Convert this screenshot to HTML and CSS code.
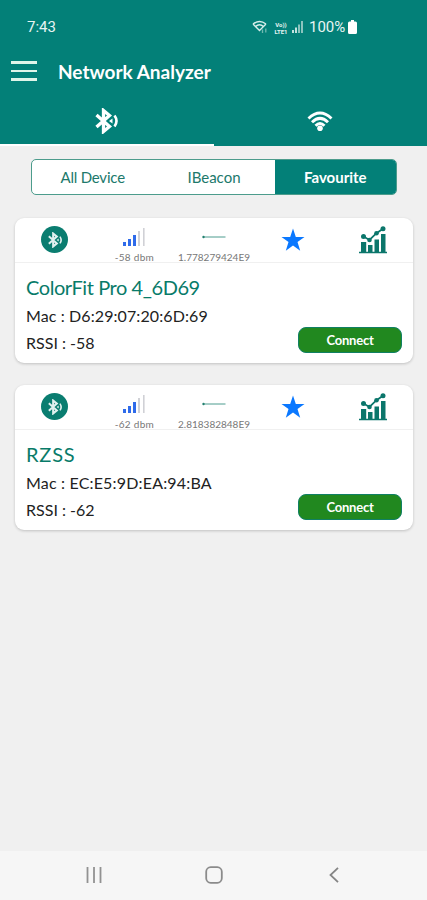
FILE: index.html
```html
<!DOCTYPE html>
<html lang="en">
<head>
    <meta charset="UTF-8">
    <meta name="viewport" content="width=device-width, initial-scale=1.0">
    <title>Network Analyzer</title>
    <link rel="stylesheet" href="styles.css">
</head>
<body>
    <!-- Shared icons -->
    <svg class="defs" width="0" height="0">
        <symbol id="bluetooth" viewBox="0 0 24 26">
            <path d="M2 7 L15 18.5 L9 23.5 V2.500 L15 7.5 L2 19" fill="none" stroke="currentColor" stroke-width="3.300"/>
            <path d="M14.5 13 L18 10.5 V15.5 Z" fill="currentColor"/>
            <path d="M20 7.5 Q24 13 20 18.5" fill="none" stroke="currentColor" stroke-width="2.600"/>
        </symbol>
        <symbol id="wifi" viewBox="0 0 26 20">
            <path d="M1.5 7.5 Q13 -3.5 24.5 7.5 M5 11.3 Q13 3.5 21 11.3 M8.5 14.7 Q13 10.3 17.5 14.7" fill="none" stroke="currentColor" stroke-width="2.900"/>
            <circle cx="13" cy="17.2" r="2.8" fill="currentColor"/>
        </symbol>
        <symbol id="signal" viewBox="0 0 22 20">
            <path d="M0 15h3v4H0zM5 12h3v7H5zM10 8h3v11h-3z" fill="#2f6bea"/>
            <path d="M15 4h2v15h-2zM20 1h1.6v18H20z" fill="#d0d1d6"/>
        </symbol>
        <symbol id="distance" viewBox="0 0 24 4">
            <path d="M1 2h22.5" stroke="#4d9c8f"/>
            <circle cx="1.5" cy="2" r="1.2" fill="#23806f"/>
        </symbol>
        <symbol id="star" viewBox="0 0 24 24">
            <path d="M12 .5l2.8 8.4h8.7l-7 5.2 2.7 8.6-7.2-5.3-7.2 5.3 2.7-8.6-7-5.2h8.7z" fill="#0a78ff"/>
        </symbol>
        <symbol id="chart" viewBox="0 0 28 28">
            <path d="M2 16h5.2v10H2zM9 19h4.5v7H9zM15.500 13.500h4.500v12.500h-4.500zM22 8h4.500v18h-4.500zM0 25.800h28v1.500H0z" fill="#0b766b"/>
            <path d="M4.500 10.500l6 3.500 7-6.800 6.500-4.400" fill="none" stroke="#0b766b" stroke-width="1.800"/>
            <g fill="#0b766b">
                <circle cx="4.500" cy="10.500" r="2.500"/>
                <circle cx="10.500" cy="14" r="2.300"/>
                <circle cx="17.500" cy="7.200" r="2.300"/>
                <circle cx="24" cy="2.800" r="2.500"/>
            </g>
        </symbol>
    </svg>

    <header class="header">
        <div class="status-bar">
            <span class="time">7:43</span>
            <svg class="status-wifi" width="16" height="14" viewBox="0 0 16 14">
                <path d="M1 4Q7.500-1 14 4M3.500 6.500Q7.500 3 11.500 6.500M1 4l6.500 6.500L14 4" fill="none" stroke="#d8eeeb" stroke-width="1.400"/>
                <path d="M10.500 9.500v3.500M13.800 8.500v4" stroke="#72b9b1" stroke-width="1.300"/>
            </svg>
            <span class="volte"><span>Vo))</span><span>LTE1</span></span>
            <svg class="status-signal" width="11" height="12" viewBox="0 0 11 12">
                <path d="M0 9h2v3H0zM3 6.500h2V12H3z" fill="#c3e2df"/>
                <path d="M6 3.500h2V12H6zM9 0h2v12H9z" fill="#8bc4be"/>
            </svg>
            <span class="percent">100%</span>
            <svg class="battery" width="9" height="14" viewBox="0 0 9 14">
                <path d="M3 0h3v1.500h1.500Q9 1.500 9 3v9.500Q9 14 7.500 14h-6Q0 14 0 12.500V3Q0 1.500 1.500 1.500H3z" fill="#fff"/>
            </svg>
        </div>
        <div class="app-bar">
            <div class="menu"><span></span><span></span><span></span></div>
            <h1>Network Analyzer</h1>
        </div>
        <nav class="tabs">
            <div class="tab active"><svg width="25" height="26"><use href="#bluetooth"/></svg></div>
            <div class="tab"><svg width="26" height="20"><use href="#wifi"/></svg></div>
        </nav>
    </header>

    <main>
        <div class="filter">
            <span class="all">All Device</span>
            <span class="ibeacon">IBeacon</span>
            <span class="selected">Favourite</span>
        </div>

        <section class="card">
            <div class="card-head">
                <div class="badge"><svg width="16" height="16"><use href="#bluetooth"/></svg></div>
                <div class="stat"><svg width="22" height="20"><use href="#signal"/></svg><span class="dbm">-58 dbm</span></div>
                <div class="stat"><svg width="24" height="20"><use href="#distance"/></svg><span class="dist">1.778279424E9</span></div>
                <div class="icon"><svg width="24" height="24"><use href="#star"/></svg></div>
                <div class="icon"><svg width="28" height="28"><use href="#chart"/></svg></div>
            </div>
            <div class="card-body">
                <h2 class="name-long">ColorFit Pro 4_6D69</h2>
                <p class="mac">Mac : D6:29:07:20:6D:69</p>
                <p>RSSI : -58</p>
                <button>Connect</button>
            </div>
        </section>

        <section class="card">
            <div class="card-head">
                <div class="badge"><svg width="16" height="16"><use href="#bluetooth"/></svg></div>
                <div class="stat"><svg width="22" height="20"><use href="#signal"/></svg><span class="dbm">-62 dbm</span></div>
                <div class="stat"><svg width="24" height="20"><use href="#distance"/></svg><span class="dist">2.818382848E9</span></div>
                <div class="icon"><svg width="24" height="24"><use href="#star"/></svg></div>
                <div class="icon"><svg width="28" height="28"><use href="#chart"/></svg></div>
            </div>
            <div class="card-body">
                <h2 class="name-short">RZSS</h2>
                <p class="mac mac-wide">Mac : EC:E5:9D:EA:94:BA</p>
                <p>RSSI : -62</p>
                <button>Connect</button>
            </div>
        </section>
    </main>

    <footer class="nav-bar">
        <svg width="16" height="16" viewBox="0 0 16 16"><path d="M1.500 0v16M8 0v16M14.500 0v16" stroke="#929292" stroke-width="1.800"/></svg>
        <svg width="18" height="18" viewBox="0 0 18 18"><rect x="1.200" y="1.200" width="15.600" height="15.600" rx="4.500" fill="none" stroke="#8b8b8b" stroke-width="1.800"/></svg>
        <svg width="10" height="16" viewBox="0 0 10 16"><path d="M9 .8L1.500 8 9 15.200" fill="none" stroke="#858585" stroke-width="1.800"/></svg>
    </footer>
</body>
</html>
```

FILE: styles.css
```css
* {
    box-sizing: border-box;
}

body {
    display: flex;
    flex-direction: column;
    height: 900px;
    margin: 0;
    overflow: hidden;
    background-color: #f0f0f0;
    color: #222;
    font-family: Lato, sans-serif;
}

h1, h2, p {
    margin: 0;
    font-weight: normal;
    white-space: nowrap;
}

svg {
    display: block;
    flex: none;
}

.defs {
    position: absolute;
}

/* Header */
.header {
    height: 146px;
    background-color: #038078;
    color: #fff;
    flex: none;
}

.status-bar {
    display: flex;
    align-items: center;
    height: 54px;
    padding-left: 27px;
    font-family: Roboto, sans-serif;
    font-size: 15px;
    color: #e8f5f3;
}

.time {
    width: 225px;
}

.volte {
    display: flex;
    flex-direction: column;
    width: 16px;
    margin: 2px 3px 0 5px;
    font-size: 6px;
    font-weight: bold;
    line-height: 7px;
    text-align: center;
}

.percent {
    width: 38px;
    margin-left: 6px;
}

.battery {
    margin-left: 1px;
}

.app-bar {
    display: flex;
    align-items: center;
    height: 34px;
    padding-left: 11px;
}

.menu {
    display: flex;
    flex-direction: column;
    gap: 6px;
    width: 26px;
    margin-right: 21px;
}

.menu span {
    height: 2.500px;
    background-color: #dff5e9;
}

.app-bar h1 {
    font-size: 19px;
    font-weight: bold;
}

.tabs {
    display: flex;
    height: 58px;
}

.tab {
    display: flex;
    justify-content: center;
    align-items: center;
    width: 50%;
    padding-bottom: 4px;
    padding-top: 14px;
    border-bottom: 2px solid transparent;
}

.tab.active {
    border-color: #fff;
}

/* Device filter */
main {
    flex: 1;
    padding: 13px 14px 0 15px;
}

.filter {
    display: grid;
    grid-template-columns: 1fr 1fr 1fr;
    height: 36px;
    margin: 0 16px 23px;
    border: 1px solid #4c9c8c;
    border-radius: 5px;
    background-color: #fff;
    color: #20796b;
    font-size: 15px;
    line-height: 35px;
    text-align: center;
    overflow: hidden;
}

.filter .all {
    letter-spacing: -0.2px;
}

.filter .selected {
    background-color: #038078;
    color: #fff;
    font-weight: bold;
}

/* Device cards */
.card {
    height: 145px;
    margin-bottom: 22px;
    border-radius: 9px;
    background-color: #fff;
    box-shadow: 0 1px 3px rgba(0, 0, 0, 0.2);
}

.card-head {
    display: grid;
    grid-template-columns: repeat(5, 1fr);
    justify-items: center;
    height: 45px;
    border-bottom: 1px solid #f0f0f0;
}

.badge {
    display: flex;
    justify-content: center;
    align-items: center;
    width: 27px;
    height: 27px;
    margin-top: 8px;
    border-radius: 50%;
    background-color: #0a7d70;
    color: #e1f1ef;
}

.stat {
    display: flex;
    flex-direction: column;
    align-items: center;
    gap: 4px;
    padding-top: 9px;
    color: #777;
    font-size: 10px;
    line-height: 12px;
    white-space: nowrap;
}

.dbm {
    letter-spacing: 0.3px;
}

.icon {
    padding-top: 8px;
}

.icon:nth-child(4) {
    padding: 10px 2px 0 0;
}

.card-body {
    position: relative;
    padding: 11px 11px 0;
}

.card-body h2 {
    height: 27px;
    color: #087b69;
    font-size: 20px;
    line-height: 26px;
}

.card-body .name-long {
    letter-spacing: -0.43px;
}

.card-body .name-short {
    letter-spacing: 0.8px;
}

.card-body p {
    height: 27px;
    font-size: 16px;
    line-height: 30px;
}

.card-body .mac {
    letter-spacing: 0.1px;
}

.card-body .mac-wide {
    letter-spacing: 0.18px;
}

.card-body button {
    position: absolute;
    right: 11px;
    bottom: 2px;
    width: 104px;
    height: 26px;
    padding: 0;
    border: 1px solid #108064;
    border-radius: 8px;
    background-color: #21881f;
    color: #fff;
    font-family: Lato, sans-serif;
    font-size: 13px;
    font-weight: bold;
    letter-spacing: -0.2px;
}

/* Android navigation */
.nav-bar {
    display: grid;
    grid-template-columns: repeat(3, 120px);
    justify-content: center;
    justify-items: center;
    align-items: center;
    height: 49px;
    padding-bottom: 2px;
    background-color: #f6f6f6;
}
```
